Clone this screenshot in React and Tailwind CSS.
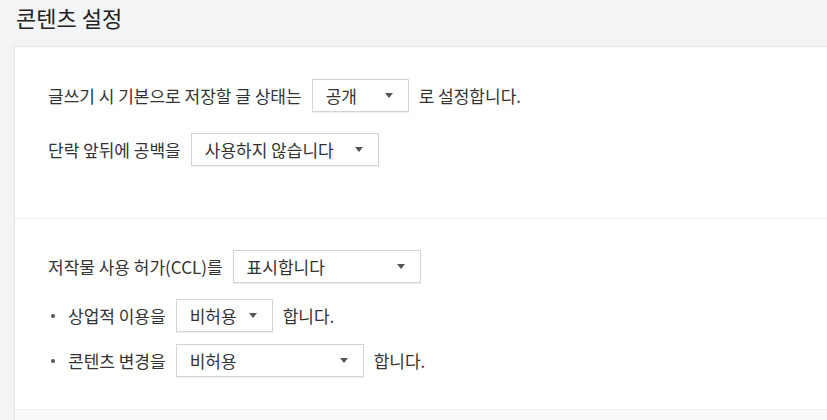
import React from 'react'

const Select = ({ value, width }) => (
  <div
    className={`flex h-[33px] shrink-0 items-center justify-between border border-[#d4d4d4] bg-white pl-[13px] pr-[15px] shadow-[0_1px_1px_rgba(0,0,0,0.06)] ${width}`}
  >
    <span className="text-[17px] text-[#333]">{value}</span>
    <svg width="8" height="5" viewBox="0 0 8 5" className="text-[#555]">
      <path d="M0 0 L8 0 L4 5 Z" fill="currentColor" />
    </svg>
  </div>
)

const Bullet = () => (
  <span className="mr-[13px] ml-[3px] inline-block h-[4px] w-[4px] rounded-full bg-[#555]" />
)

export default function App() {
  return (
    <div className="min-h-screen bg-[#f3f4f6] font-['Noto_Sans_CJK_KR','Noto_Sans',sans-serif] text-[17px] text-[#333]">
      <h2 className="h-[46px] pl-4 pt-[2px] text-[22px] leading-[30px] text-[#222]">콘텐츠 설정</h2>

      <div className="ml-[14px] border-t border-l border-[#e2e4e8] bg-white">
        {/* 기본 설정 */}
        <section className="border-b border-[#efefef] pt-[32px] pb-[52px] pl-[33px]">
          <div className="flex h-[33px] items-center">
            <span>글쓰기 시 기본으로 저장할 글 상태는</span>
            <div className="mx-[10px]">
              <Select value="공개" width="w-[97px]" />
            </div>
            <span>로 설정합니다.</span>
          </div>
          <div className="mt-[21px] flex h-[33px] items-center">
            <span>단락 앞뒤에 공백을</span>
            <div className="mx-[10px]">
              <Select value="사용하지 않습니다" width="w-[188px]" />
            </div>
          </div>
        </section>

        {/* CCL */}
        <section className="border-b border-[#efefef] pt-[31px] pb-[32px] pl-[33px]">
          <div className="flex h-[33px] items-center">
            <span>저작물 사용 허가(CCL)를</span>
            <div className="mx-[10px]">
              <Select value="표시합니다" width="w-[188px]" />
            </div>
          </div>
          <div className="mt-[16px] flex h-[33px] items-center">
            <Bullet />
            <span>상업적 이용을</span>
            <div className="mx-[10px]">
              <Select value="비허용" width="w-[97px]" />
            </div>
            <span>합니다.</span>
          </div>
          <div className="mt-[12px] flex h-[33px] items-center">
            <Bullet />
            <span>콘텐츠 변경을</span>
            <div className="mx-[10px]">
              <Select value="비허용" width="w-[188px]" />
            </div>
            <span>합니다.</span>
          </div>
        </section>

        <div className="h-[20px] bg-[#f9fafb]" />
      </div>
    </div>
  )
}
